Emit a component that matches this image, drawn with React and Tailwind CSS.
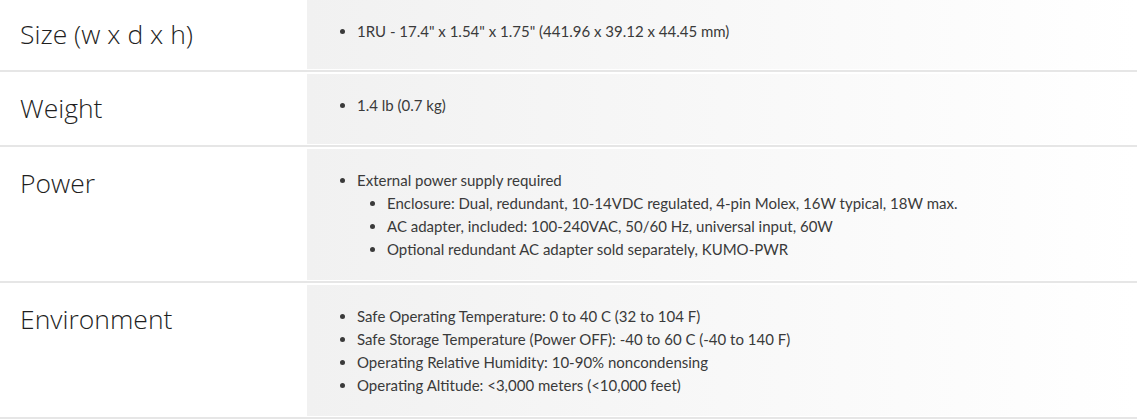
const specs = [
  {
    label: 'Size (w x d x h)',
    items: [{ text: '1RU - 17.4" x 1.54" x 1.75" (441.96 x 39.12 x 44.45 mm)' }],
    h: 'h-[69px]',
  },
  {
    label: 'Weight',
    items: [{ text: '1.4 lb (0.7 kg)' }],
    h: 'h-[70px]',
  },
  {
    label: 'Power',
    items: [
      {
        text: 'External power supply required',
        sub: [
          'Enclosure: Dual, redundant, 10-14VDC regulated, 4-pin Molex, 16W typical, 18W max.',
          'AC adapter, included: 100-240VAC, 50/60 Hz, universal input, 60W',
          'Optional redundant AC adapter sold separately, KUMO-PWR',
        ],
      },
    ],
    h: 'h-[131px]',
  },
  {
    label: 'Environment',
    items: [
      { text: 'Safe Operating Temperature: 0 to 40 C (32 to 104 F)' },
      { text: 'Safe Storage Temperature (Power OFF): -40 to 60 C (-40 to 140 F)' },
      { text: 'Operating Relative Humidity: 10-90% noncondensing' },
      { text: 'Operating Altitude: <3,000 meters (<10,000 feet)' },
    ],
    h: 'h-[131px]',
  },
];

export default function App() {
  return (
    <div className="w-[1137px] h-[419px] bg-white text-[#333] font-['Lato',sans-serif] overflow-hidden">
      {specs.map(row => (
        <div key={row.label} className="flex pb-px mb-[2px] border-b-2 border-[#e6e6e6]">
          {/* label column */}
          <div className="w-[307px] shrink-0 pl-5 pt-[17px] font-['Open_Sans',sans-serif] font-light text-[26.5px] leading-[34px] text-[#1f1f1f]">
            {row.label}
          </div>
          {/* value column */}
          <div className={`flex-1 ${row.h} bg-gradient-to-r from-[#f1f1f1] to-white pl-[50px] pt-[20px]`}>
            <ul className="list-disc text-[15px] leading-[23px] text-[#3a3a3a]">
              {row.items.map(it => (
                <li key={it.text}>
                  {it.text}
                  {it.sub && (
                    <ul className="list-disc pl-[30px]">
                      {it.sub.map(s => <li key={s}>{s}</li>)}
                    </ul>
                  )}
                </li>
              ))}
            </ul>
          </div>
        </div>
      ))}
    </div>
  );
}
